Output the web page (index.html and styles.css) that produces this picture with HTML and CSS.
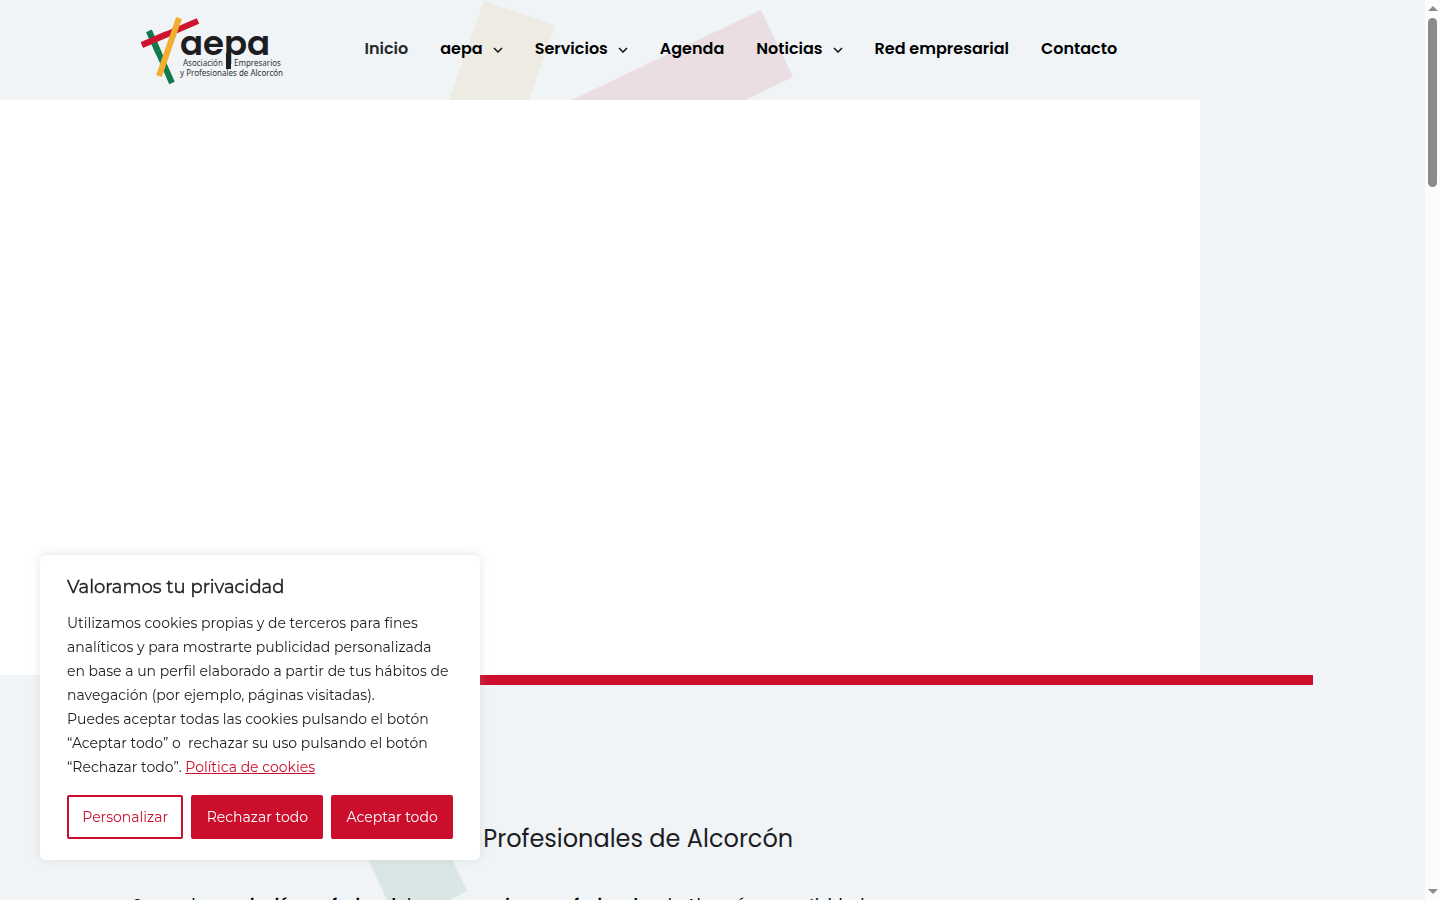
FILE: index.html
```html
<!DOCTYPE html>
<html lang="es">
<head>
<meta charset="utf-8">
<meta name="viewport" content="width=device-width, initial-scale=1">
<title>aepa – Asociación Empresarios y Profesionales de Alcorcón</title>
<link rel="stylesheet" href="styles.css">
</head>
<body>
<div class="page">
  <svg class="backdrop" width="900" height="900" viewBox="0 0 900 900" aria-hidden="true">
    <path fill="#eeebe3" d="M484 1 555 25 529 100V675H300L449 100Z"/>
    <path fill="#ebdee3" d="M761 10 793 77 743 101 500 220V134Z"/>
    <path fill="#dae6e5" d="M340 800H424L467 891 446 902H388Z"/>
  </svg>
  <header class="header">
    <a class="logo" href="#" aria-label="aepa, inicio">
      <svg width="152" height="76" viewBox="0 0 152 76">
        <g fill="none" stroke-width="6">
          <path stroke="#12794d" d="M12 18 35 70"/>
          <path stroke="#cf142f" d="M5 32 61 8"/>
          <path stroke="#f2ae30" d="M42 5 22 63"/>
          <path stroke="#12794d" d="M12 18 22 41"/>
          <path stroke="#cf142f" d="M5 32 30 21"/>
        </g>
        <text class="wordmark" x="43" y="42">aepa</text>
        <path fill="#1d1d1f" d="M89 40H94V56H89Z"/>
        <g class="logo-text"><text x="46" y="53">Asociación</text><text x="97" y="53">Empresarios</text><text x="43" y="63">y Profesionales de Alcorcón</text></g>
      </svg>
    </a>
    <nav class="nav" aria-label="Principal">
      <a class="current" href="#">Inicio</a>
      <a href="#">aepa <svg class="chevron" viewBox="0 0 10 6"><path d="M1 1 5 5 9 1"/></svg></a>
      <a href="#">Servicios <svg class="chevron" viewBox="0 0 10 6"><path d="M1 1 5 5 9 1"/></svg></a>
      <a href="#">Agenda</a>
      <a href="#">Noticias <svg class="chevron" viewBox="0 0 10 6"><path d="M1 1 5 5 9 1"/></svg></a>
      <a href="#">Red empresarial</a>
      <a href="#">Contacto</a>
    </nav>
  </header>
  <main>
    <div class="slider"></div>
    <section class="intro">
      <h1>Asociación de Empresarios y Profesionales de Alcorcón</h1>
      <p>Somos la <b>asociación profesional</b> de <b>empresarios y profesionales</b> de Alcorcón, en actividad</p>
    </section>
  </main>
</div>
<section class="consent" aria-labelledby="consent-title">
  <h2 id="consent-title">Valoramos tu privacidad</h2>
  <p>Utilizamos cookies propias y de terceros para fines<br>analíticos y para mostrarte publicidad personalizada<br>en base a un perfil elaborado a partir de tus hábitos de<br>navegación (por ejemplo, páginas visitadas).<br>Puedes aceptar todas las cookies pulsando el botón<br>“Aceptar todo” o&nbsp; rechazar su uso pulsando el botón<br>“Rechazar todo”. <a href="#">Política de cookies</a></p>
  <div class="actions">
    <button class="outline" type="button">Personalizar</button>
    <button type="button">Rechazar todo</button>
    <button type="button">Aceptar todo</button>
  </div>
</section>
<div class="scrollbar" aria-hidden="true"><i class="up"></i><i class="thumb"></i><i class="down"></i></div>
</body>
</html>
```
FILE: styles.css
```css
* { box-sizing: border-box; }
body { margin: 0; height: 100vh; overflow: hidden; background: #f0f4f7; color: #1d1d1f; font-family: Poppins, Inter, sans-serif; }
.page { position: relative; height: 100%; overflow: hidden; margin-right: 15px; }
.backdrop { position: absolute; top: 0; left: 0; }
.header { position: relative; display: flex; align-items: center; gap: 76px; height: 100px; max-width: 1200px; margin: 0 auto; padding: 0 24px; }
.logo { display: flex; padding-top: 2px; }
.wordmark { font: 600 34px Poppins, sans-serif; fill: #1d1d1f; }
.logo-text { font: 8px "Noto Sans", sans-serif; fill: #333; }
.nav { display: flex; gap: 32px; padding-bottom: 2px; }
.nav a { display: flex; align-items: center; gap: 10px; color: #000; font-size: 16px; line-height: 24px; font-weight: 600; text-decoration: none; white-space: nowrap; }
.nav .current { color: #26282b; }
.chevron { width: 10px; height: 6px; margin-top: 2px; fill: none; stroke: #111; stroke-width: 1.5; }
.slider { position: relative; height: 575px; max-width: 1200px; background: #fff; }
.intro { position: relative; max-width: 1200px; margin: 0 auto; padding: 135px 20px 0; border-top: 10px solid #cc0e2d; }
.intro h1 { margin: 0 0 33px; font-size: 24px; line-height: 38px; font-weight: 400; }
.intro p { margin: 0; font-size: 16px; line-height: 28px; color: #000; }
.intro b { font-weight: 600; }
.consent { position: fixed; left: 40px; bottom: 40px; width: 440px; padding: 20px 27px 21px; background: #fff; border-radius: 6px; box-shadow: 0 -1px 10px #acabab4d; color: #212121; font-family: Montserrat, "Open Sans", sans-serif; }
.consent h2 { margin: 0 0 12px; font-size: 18px; line-height: 24px; font-weight: 400; -webkit-text-stroke: thin #212121; }
.consent p { margin: 0 0 16px; font-size: 14px; line-height: 24px; white-space: nowrap; }
.consent a { color: #cc0e2d; }
.actions { display: flex; gap: 8px; }
.actions button { flex: 1 1 auto; height: 44px; padding: 0 12px; border: 2px solid #cc0e2d; border-radius: 2px; background: #cc0e2d; color: #fff; font: 14px Montserrat, "Open Sans", sans-serif; }
.actions .outline { background: #fff; color: #cc0e2d; }
.scrollbar { position: fixed; top: 0; right: 0; bottom: 0; width: 15px; padding: 6px 0; background: #fcfcfc; display: flex; flex-direction: column; align-items: center; }
.up, .down { border: 5px solid transparent; border-top-width: 0; border-bottom: 5px solid #8b8b8b; }
.down { margin-top: auto; border-bottom-width: 0; border-top: 5px solid #8b8b8b; }
.thumb { width: 9px; height: 169px; margin-top: 7px; border-radius: 5px; background: #8b8b8b; }
```
